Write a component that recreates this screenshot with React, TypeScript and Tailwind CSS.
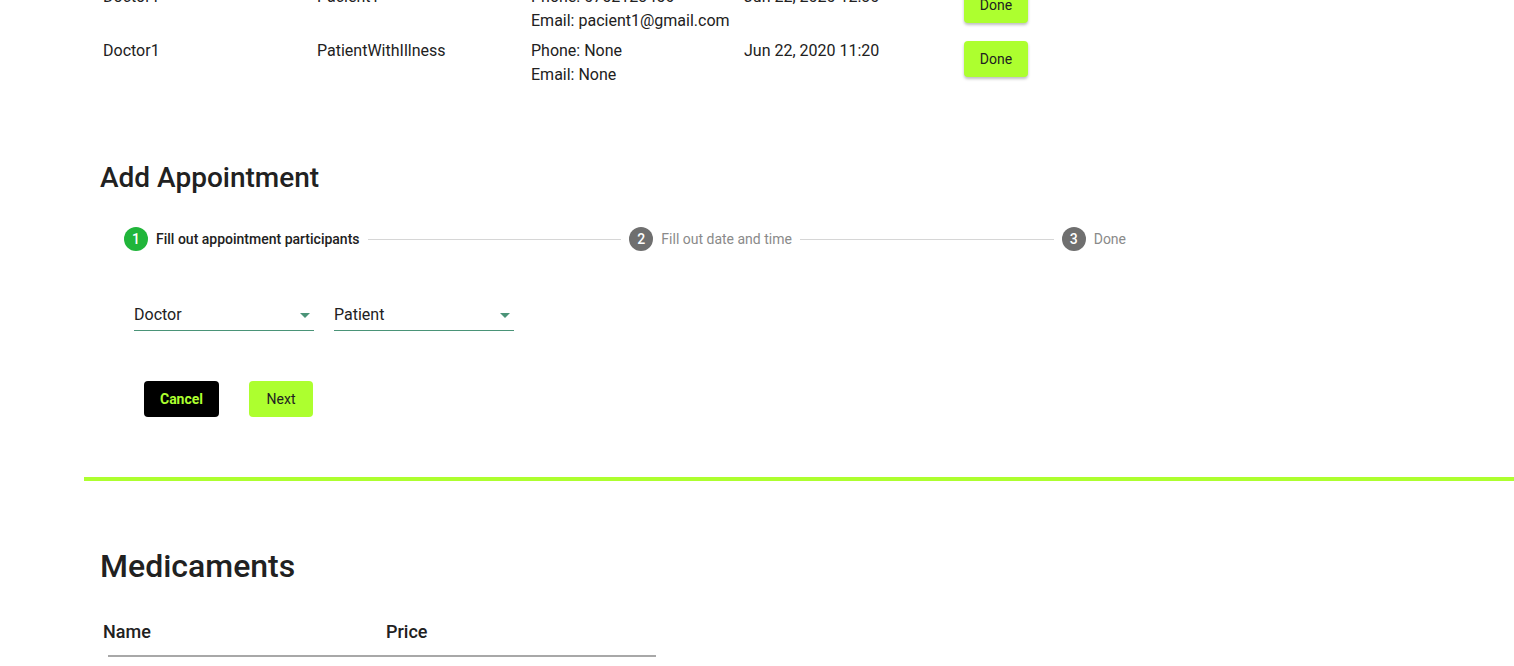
import React from 'react';

interface Appointment {
  doctor: string;
  patient: string;
  phone: string;
  email: string;
  date: string;
}

const appointments: Appointment[] = [
  { doctor: 'Doctor1', patient: 'Pacient1', phone: '0752123456', email: 'pacient1@gmail.com', date: 'Jun 22, 2020 12:30' },
  { doctor: 'Doctor1', patient: 'PatientWithIllness', phone: 'None', email: 'None', date: 'Jun 22, 2020 11:20' },
];

const steps = ['Fill out appointment participants', 'Fill out date and time', 'Done'];

const SelectField: React.FC<{ label: string }> = ({ label }) => (
  <div className="w-[180px] flex items-center justify-between border-b border-[#4a9478] pt-[1px] pb-[3px] h-[29px]">
    <span className="text-[16px] leading-6 text-[#212121]">{label}</span>
    <svg width="10" height="5" viewBox="0 0 10 5" className="mr-[4px]">
      <path d="M0 0 L10 0 L5 5 Z" fill="#4a9478" />
    </svg>
  </div>
);

const App: React.FC = () => {
  return (
    <div className="w-[1514px] h-[666px] overflow-hidden bg-white font-['Roboto',sans-serif] text-[#212121]">
      {/* appointments table, scrolled past the header */}
      <div className="mt-[-19px] pl-[103px]">
        {appointments.map((a, i) => (
          <div key={i} className="grid grid-cols-[214px_214px_213px_220px_80px] pt-[4px] pb-[2px] text-[16px] leading-6">
            <div>{a.doctor}</div>
            <div>{a.patient}</div>
            <div>
              <div>Phone: {a.phone}</div>
              <div>Email: {a.email}</div>
            </div>
            <div>{a.date}</div>
            <div>
              <button className="mt-[2px] w-[64px] h-[36px] rounded bg-[#adff2f] text-[14px] text-[#212121] shadow-[0_2px_3px_rgba(0,0,0,0.25)]">
                Done
              </button>
            </div>
          </div>
        ))}
      </div>

      {/* add appointment */}
      <div className="pl-[100px] mt-[71px]">
        <h2 className="text-[28px] leading-9 font-medium">Add Appointment</h2>
        <div className="ml-[24px] mt-[31px] w-[1002px] flex items-center">
          {steps.map((s, i) => (
            <React.Fragment key={s}>
              {i > 0 && <div className="flex-1 mx-2 h-px bg-[#d6d6d6]" />}
              <div className="flex items-center gap-2">
                <div
                  className={
                    'w-6 h-6 rounded-full flex items-center justify-center text-white text-[14px] font-medium ' +
                    (i === 0 ? 'bg-[#20b53a]' : 'bg-[#6f6f6f]')
                  }
                >
                  {i + 1}
                </div>
                <span className={'text-[14px] ' + (i === 0 ? 'text-[#212121] font-medium' : 'text-[#8a8a8a]')}>{s}</span>
              </div>
            </React.Fragment>
          ))}
        </div>
        <div className="ml-[34px] mt-[51px] flex gap-5">
          <SelectField label="Doctor" />
          <SelectField label="Patient" />
        </div>
        <div className="ml-[44px] mt-[50px] flex gap-[30px]">
          <button className="w-[75px] h-[36px] rounded bg-black text-[#adff2f] text-[14px] font-bold">Cancel</button>
          <button className="w-[64px] h-[36px] rounded bg-[#adff2f] text-[#212121] text-[14px]">Next</button>
        </div>
      </div>

      <div className="ml-[84px] mt-[60px] h-[4px] bg-[#adff2f]" />

      {/* medicaments */}
      <div className="pl-[100px] mt-[65px]">
        <h2 className="text-[32px] leading-10 font-medium">Medicaments</h2>
        <div className="mt-[32px] w-[556px]">
          <div className="grid grid-cols-[283px_1fr] pl-[3px] text-[18px] leading-7 font-medium">
            <div>Name</div>
            <div>Price</div>
          </div>
          <div className="ml-[8px] mt-[9px] h-[2px] bg-[#a8a8a8] w-[548px]" />
        </div>
      </div>
    </div>
  );
};

export default App;
